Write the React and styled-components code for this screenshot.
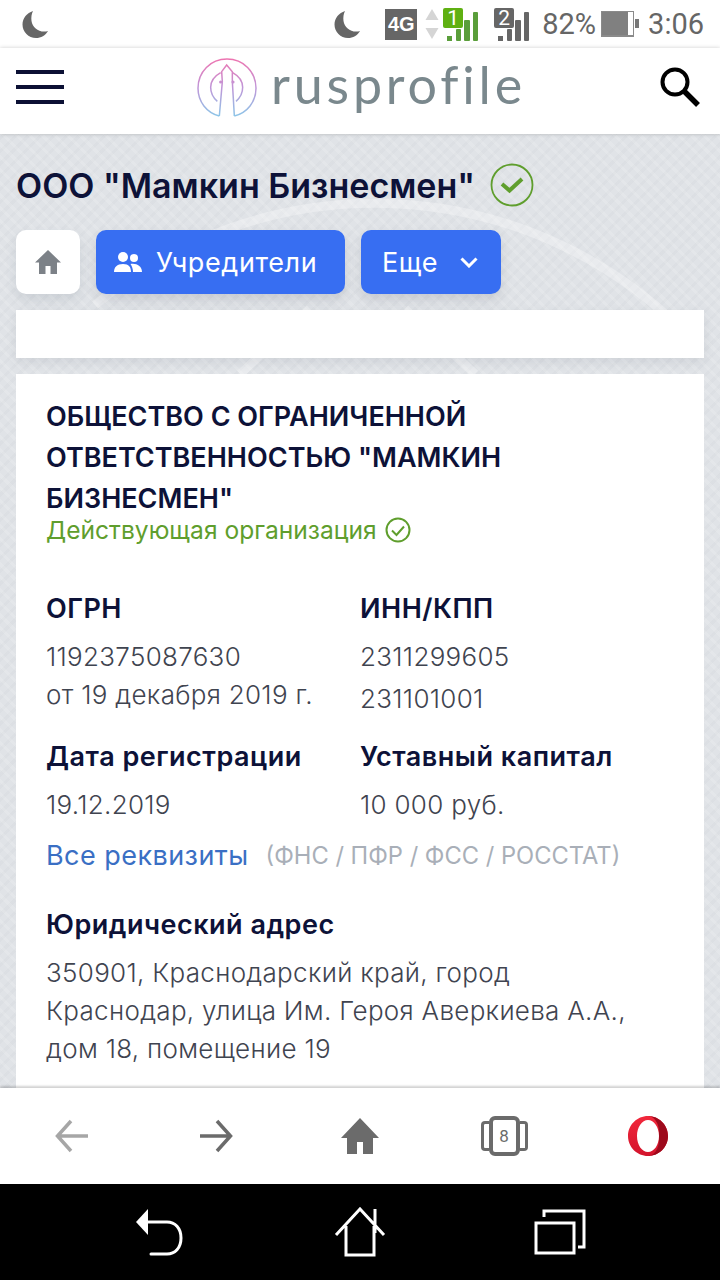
import React from "react";
import styled, { createGlobalStyle } from "styled-components";

const Global = createGlobalStyle`
  html, body { margin: 0; padding: 0; background: #000; }
  * { box-sizing: border-box; }
  body { font-family: Inter, "Noto Sans", sans-serif; }
`;

const Moon = () => (
  <svg width="28" height="28" viewBox="0 0 28 28">
    <path d="M11 1C5 3 .5 8 .5 14.500 .5 22 6.500 28 14 28c5 0 9.500-2.600 12-7-1.200.4-2.500.6-3.800.6C15.500 21.600 10.500 17 9.500 11 9 7.500 9.500 4 11 1Z" fill="#666" />
  </svg>
);

const Bars = ({ color, num, ml }) => (
  <SimWrap $ml={ml}>
    <svg width="36" height="36" viewBox="0 0 36 36" fill={color}>
      <rect x="4" y="30" width="5" height="5" />
      <rect x="13" y="23" width="5" height="12" rx="1" />
      <rect x="21" y="14" width="6" height="21" rx="1" />
      <rect x="30" y="6" width="5" height="29" rx="1" />
    </svg>
    <SimNum $bg={color === "#5a9e3a" ? "#5fb012" : color}>{num}</SimNum>
  </SimWrap>
);

export default function App() {
  return (
    <Screen>
      <Global />
      <StatusBar>
        <Moon />
        <StatusRight>
          <Moon />
          <Net>4G</Net>
          <Arrows width="14" height="30" viewBox="0 0 14 30">
            <path d="M7 0l6.500 11H.5z" fill="#d5d5d5" />
            <path d="M7 30l6.500-11H.5z" fill="#d5d5d5" />
          </Arrows>
          <Bars color="#5a9e3a" num="1" ml={4} />
          <Bars color="#666" num="2" ml={15} />
          <Percent>82%</Percent>
          <Battery>
            <BatteryFill />
          </Battery>
          <Clock>3:06</Clock>
        </StatusRight>
      </StatusBar>

      <Header>
        <Burger>
          <span />
          <span />
          <span />
        </Burger>
        <Logo>
          <svg width="80" height="75" viewBox="0 0 240 225" fill="none" stroke="url(#lg)" strokeWidth="4.500">
            <defs>
              <linearGradient id="lg" gradientUnits="userSpaceOnUse" x1="0" y1="25" x2="0" y2="200">
                <stop offset="0" stopColor="#ee74b0" />
                <stop offset="0.5" stopColor="#c096d8" />
                <stop offset="1" stopColor="#8cc6e8" />
              </linearGradient>
            </defs>
            <path d="M88 198C50 188 24 155 24 115 24 65 62 27 111 27s87 38 87 88c0 40-26 73-65 83" />
            <path d="M92 68C74 78 62 94 62 112c0 18 8 32 20 42M128 68c18 10 30 26 30 44 0 18-8 32-20 42" />
            <path d="M88 198l9-103-2-30 15-20 17 20v30l6 103" />
            <circle cx="92" cy="96" r="2.500" />
            <circle cx="129" cy="96" r="2.500" />
          </svg>
          <LogoText>rusprofile</LogoText>
        </Logo>
        <svg width="40" height="40" viewBox="0 0 40 40" fill="none" stroke="#000">
          <circle cx="15" cy="15" r="12.500" strokeWidth="4" />
          <path d="M24 24l14 14" strokeWidth="5.500" />
        </svg>
      </Header>

      <Page>
        <Backdrop viewBox="0 0 720 946" fill="none" stroke="#fff" strokeOpacity="0.3">
          <path d="M95 171A436 436 0 0 1 690 204" strokeWidth="9" />
          <path d="M310 175L240 240M405 175l70 65" strokeWidth="9" />
        </Backdrop>
        <TitleRow>
          <Title>ООО "Мамкин Бизнесмен"</Title>
          <svg width="44" height="44" viewBox="0 0 44 44" fill="none" stroke="#5f9e2d">
            <circle cx="22" cy="22" r="20.500" strokeWidth="1.800" />
            <path d="M12 21l7.500 6.500L32 16" strokeWidth="4" />
          </svg>
        </TitleRow>
        <Tabs>
          <HomeTab>
            <svg width="28" height="26" viewBox="0 0 28 26">
              <path d="M14 1L1 13.500h4V25h6.500v-8h5v8H23V13.500h4z" fill="#7c8187" />
            </svg>
          </HomeTab>
          <BlueTab $width={249} $pad={18}>
            <svg width="28" height="21" viewBox="0 0 28 21" fill="#fff">
              <circle cx="9" cy="5" r="5" />
              <circle cx="20" cy="6" r="4" />
              <path d="M0 20c0-5 3-8 9-8s8 3 8 8zM19 20c0-3-1-6-2.500-8 6-1 11.500 2 11.500 8z" />
            </svg>
            Учредители
          </BlueTab>
          <BlueTab $width={140} $pad={21}>
            Еще
            <Chevron width="18" height="11" viewBox="0 0 18 11" fill="none">
              <path d="M1.500 1.500L9 9l7.500-7.500" stroke="#fff" strokeWidth="3" />
            </Chevron>
          </BlueTab>
        </Tabs>
        <BlankPanel />
        <Card>
          <OrgName>ОБЩЕСТВО С ОГРАНИЧЕННОЙ ОТВЕТСТВЕННОСТЬЮ "МАМКИН БИЗНЕСМЕН"</OrgName>
          <Status>
            Действующая организация
            <svg width="26" height="26" viewBox="0 0 26 26" fill="none" stroke="#5f9e2d" strokeWidth="2">
              <circle cx="13" cy="13" r="11.500" />
              <path d="M7 13.500l4.500 4.500L19 9.500" />
            </svg>
          </Status>
          <Grid>
            <div>
              <Label>ОГРН</Label>
              <Value>1192375087630</Value>
              <Value>от 19 декабря 2019 г.</Value>
            </div>
            <div>
              <Label>ИНН/КПП</Label>
              <Value>2311299605</Value>
              <Value $gap>231101001</Value>
            </div>
            <div>
              <Label>Дата регистрации</Label>
              <Value>19.12.2019</Value>
            </div>
            <div>
              <Label>Уставный капитал</Label>
              <Value>10 000 руб.</Value>
            </div>
          </Grid>
          <LinkRow>
            <AllLink>Все реквизиты</AllLink>
            <Muted>(ФНС / ПФР / ФСС / РОССТАТ)</Muted>
          </LinkRow>
          <AddressLabel>Юридический адрес</AddressLabel>
          <Value>
            350901, Краснодарский край, город
            <br />
            Краснодар, улица Им. Героя Аверкиева А.А.,
            <br />
            дом 18, помещение 19
          </Value>
        </Card>
      </Page>

      <BrowserBar>
        <svg width="36" height="36" viewBox="0 0 36 36" fill="none" stroke="#a6a6a6" strokeWidth="3.500">
          <path d="M34 18H4M17 3L3.500 18 17 33" />
        </svg>
        <svg width="36" height="36" viewBox="0 0 36 36" fill="none" stroke="#6b6b6b" strokeWidth="3.500">
          <path d="M2 18h30M19 3l13.500 15L19 33" />
        </svg>
        <svg width="40" height="36" viewBox="0 0 40 36">
          <path d="M20 0L1 20h6v16h10V24h6v12h10V20h6z" fill="#6b6b6b" />
        </svg>
        <Pages>
          <PageSide $side="left" />
          <PageFront>8</PageFront>
          <PageSide $side="right" />
        </Pages>
        <svg width="40" height="40" viewBox="0 0 40 40">
          <defs>
            <linearGradient id="op" x1="0" y1="0" x2="0" y2="1">
              <stop offset="0" stopColor="#f2283c" />
              <stop offset="1" stopColor="#d3142c" />
            </linearGradient>
          </defs>
          <path fillRule="evenodd" fill="url(#op)" d="M20 0C9 0 0 9 0 20s9 20 20 20 20-9 20-20S31 0 20 0Zm0 4c6 0 11 7 11 16s-5 16-11 16S9 29 9 20 14 4 20 4Z" />
          <path fill="#9d0a1c" d="M20 0c11 0 20 9 20 20s-9 20-20 20c6 0 11-7 11-16V16C31 7 26 0 20 0Z" />
        </svg>
      </BrowserBar>

      <NavBar>
        <svg width="50" height="48" viewBox="0 0 50 48" fill="none" stroke="#fff" strokeWidth="3">
          <path d="M10 14h22c8 0 14 6 14 16s-6 16-14 16H16" strokeLinecap="round" />
          <path d="M13 1v26L1 14z" fill="#fff" stroke="none" />
        </svg>
        <svg width="52" height="50" viewBox="0 0 52 50" fill="none" stroke="#fff" strokeWidth="3">
          <path d="M2 28L26 2l24 26M12 19v29h28V19M41 2v24" />
        </svg>
        <svg width="52" height="46" viewBox="0 0 52 46" fill="none" stroke="#fff" strokeWidth="3">
          <rect x="2" y="14" width="38" height="30" />
          <path d="M10 8V2h40v36h-6" />
        </svg>
      </NavBar>
    </Screen>
  );
}

const Screen = styled.div`
  width: 720px;
  height: 1280px;
  display: flex;
  flex-direction: column;
  overflow: hidden;
`;

const StatusBar = styled.div`
  height: 48px;
  flex: none;
  background: #fff;
  display: flex;
  align-items: center;
  justify-content: space-between;
  padding: 0 16px 0 22px;
`;

const StatusRight = styled.div`
  display: flex;
  align-items: center;
  color: #666;
`;

const Net = styled.div`
  width: 32px;
  height: 31px;
  margin-left: 23px;
  background: #666;
  color: #fff;
  font: 700 20px "Liberation Sans", sans-serif;
  display: flex;
  align-items: center;
  justify-content: center;
`;

const Arrows = styled.svg`
  margin-left: 8px;
`;

const SimWrap = styled.div`
  position: relative;
  width: 36px;
  height: 36px;
  margin-left: ${(p) => p.$ml}px;
`;

const SimNum = styled.div`
  position: absolute;
  left: 0;
  top: 2px;
  width: 20px;
  height: 20px;
  border-radius: 2px;
  background: ${(p) => p.$bg};
  color: #fff;
  font: 400 21px/20px Roboto, sans-serif;
  text-align: center;
`;

const Percent = styled.div`
  font: 400 29px Roboto, sans-serif;
  margin-left: 12px;
`;

const Battery = styled.div`
  width: 33px;
  height: 26px;
  margin-left: 5px;
  border: 1px solid #8a8a8a;
  border-bottom-width: 2px;
  background: #fff;
  position: relative;
  &::after {
    content: "";
    position: absolute;
    right: -6px;
    top: 7px;
    width: 4px;
    height: 9px;
    background: #777;
  }
`;

const BatteryFill = styled.div`
  width: 84%;
  height: 100%;
  background: #808080;
`;

const Clock = styled.div`
  font: 400 29px Roboto, sans-serif;
  margin-left: 14px;
`;

const Header = styled.header`
  height: 86px;
  flex: none;
  background: #fff;
  display: flex;
  align-items: center;
  justify-content: space-between;
  padding: 0 20px 8px 16px;
  box-shadow: 0 0 4px rgba(0, 0, 0, 0.2);
  position: relative;
  z-index: 1;
`;

const Burger = styled.div`
  width: 48px;
  display: flex;
  flex-direction: column;
  gap: 11px;
  span {
    display: block;
    height: 4px;
    background: #0c1034;
  }
`;

const Logo = styled.div`
  display: flex;
  align-items: center;
  gap: 1px;
  margin-right: 8px;
`;

const LogoText = styled.div`
  font: 400 52px Lato, sans-serif;
  color: #7a888d;
  letter-spacing: 3.8px;
  line-height: 1;
  margin-bottom: 6px;
`;

const Page = styled.main`
  flex: 1;
  min-height: 0;
  background-color: #e0e3e7;
  background-image: repeating-linear-gradient(45deg, rgba(255, 255, 255, 0.13) 0 3px, transparent 3px 9px),
    repeating-linear-gradient(-45deg, rgba(150, 155, 165, 0.05) 0 3px, transparent 3px 9px);
  padding: 28px 16px 0;
  position: relative;
  overflow: hidden;
`;

const Backdrop = styled.svg`
  position: absolute;
  left: 0;
  top: 0;
  width: 720px;
  height: 946px;
`;

const TitleRow = styled.div`
  position: relative;
  display: flex;
  align-items: center;
  gap: 15px;
  height: 46px;
`;

const Title = styled.h1`
  margin: 0;
  font: 600 34px Inter, sans-serif;
  color: #0d1238;
`;

const Tabs = styled.div`
  position: relative;
  display: flex;
  gap: 16px;
  margin-top: 22px;
`;

const HomeTab = styled.div`
  width: 64px;
  height: 64px;
  border-radius: 10px;
  background: #fff;
  display: flex;
  align-items: center;
  justify-content: center;
  box-shadow: 0 6px 12px rgba(60, 70, 90, 0.12);
`;

const BlueTab = styled.div`
  width: ${(p) => p.$width}px;
  height: 64px;
  padding-left: ${(p) => p.$pad}px;
  border-radius: 10px;
  background: #376ef2;
  color: #fff;
  font: 400 27px Inter, sans-serif;
  letter-spacing: 0.6px;
  display: flex;
  align-items: center;
  gap: 14px;
  box-shadow: 0 6px 12px rgba(60, 70, 90, 0.15);
`;

const Chevron = styled.svg`
  margin-left: 8px;
`;

const BlankPanel = styled.div`
  position: relative;
  height: 48px;
  margin-top: 16px;
  background: #fff;
  box-shadow: 0 4px 10px rgba(60, 70, 90, 0.1);
`;

const Card = styled.section`
  position: relative;
  margin-top: 16px;
  background: #fff;
  padding: 22px 30px 0;
  height: 760px;
`;

const OrgName = styled.h2`
  margin: 0;
  font: 600 27px/41px Inter, sans-serif;
  color: #0d1238;
  width: 580px;
`;

const Status = styled.div`
  display: flex;
  align-items: center;
  gap: 8px;
  margin-top: -2px;
  font: 400 24.6px/22px Inter, sans-serif;
  color: #5f9e2d;
`;

const Grid = styled.div`
  display: grid;
  grid-template-columns: 314px 1fr;
  row-gap: 20px;
  margin-top: 47px;
`;

const Label = styled.div`
  font: 600 27px/38px Inter, sans-serif;
  letter-spacing: 0.5px;
  color: #0d1238;
  margin-bottom: 10px;
`;

const Value = styled.div`
  font: 300 26px/38px Inter, sans-serif;
  letter-spacing: 0.3px;
  color: #3f4450;
  margin-top: ${(p) => (p.$gap ? "4px" : "0")};
`;

const LinkRow = styled.div`
  display: flex;
  align-items: center;
  gap: 17px;
  margin-top: 12px;
  height: 38px;
`;

const AllLink = styled.div`
  font: 400 27px Inter, sans-serif;
  letter-spacing: 0.45px;
  color: #3a6fc4;
`;

const Muted = styled.div`
  font: 400 23.7px Inter, sans-serif;
  color: #a9afb8;
`;

const AddressLabel = styled(Label)`
  margin-top: 32px;
`;

const BrowserBar = styled.div`
  height: 96px;
  flex: none;
  background: #fff;
  display: grid;
  grid-template-columns: repeat(5, 144px);
  justify-items: center;
  align-items: center;
  box-shadow: 0 -2px 2px rgba(0, 0, 0, 0.18);
  position: relative;
`;

const Pages = styled.div`
  display: flex;
  align-items: center;
`;

const PageSide = styled.div`
  width: 8px;
  height: 30px;
  border: 3px solid #6b6b6b;
  border-${(p) => (p.$side === "left" ? "right" : "left")}: none;
  border-radius: ${(p) => (p.$side === "left" ? "4px 0 0 4px" : "0 4px 4px 0")};
`;

const PageFront = styled.div`
  width: 31px;
  height: 40px;
  border: 4px solid #6b6b6b;
  border-radius: 6px;
  color: #6b6b6b;
  font: 400 17px/32px Roboto, sans-serif;
  text-align: center;
`;

const NavBar = styled.div`
  height: 96px;
  flex: none;
  background: #000;
  display: grid;
  grid-template-columns: repeat(3, 200px);
  justify-content: center;
  justify-items: center;
  align-items: center;
`;
